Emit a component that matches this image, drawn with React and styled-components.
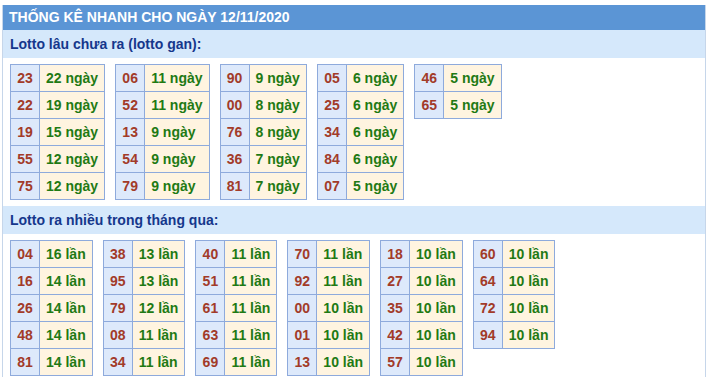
import React from "react";
import styled, { createGlobalStyle } from "styled-components";

const GlobalStyle = createGlobalStyle`
  body {
    margin: 0;
    background: #fff;
    font-family: "Liberation Sans", Arial, sans-serif;
  }
`;

const Panel = styled.div`
  margin: 5px 0 0 2px;
  width: 704px;
  border-left: 1px solid #c6d6ea;
  border-right: 1px solid #c6d6ea;
  box-sizing: border-box;
`;

const Title = styled.div`
  height: 25px;
  line-height: 25px;
  background: #5b95d5;
  color: #fff;
  font-weight: bold;
  font-size: 14px;
  padding-left: 6px;
`;

const SubTitle = styled.div`
  height: 28px;
  line-height: 28px;
  background: #d5e8fb;
  color: #15378c;
  font-weight: bold;
  font-size: 14px;
  padding-left: 7px;
`;

const Tables = styled.div`
  display: flex;
  align-items: flex-start;
  gap: 10px;
  padding: 6px 0 6px 7px;
`;

const Table = styled.table`
  border-collapse: collapse;
  font-size: 14px;
  font-weight: bold;
`;

const Num = styled.td`
  height: 26px;
  padding: 0;
  width: 28px;
  text-align: center;
  background: #dde9fb;
  color: #a23b29;
  border: 1px solid #8eaadc;
`;

const Count = styled.td`
  height: 26px;
  padding: 0 6px 0 6px;
  background: #fff4e0;
  color: #1f7a14;
  border: 1px solid #8eaadc;
  white-space: nowrap;
`;

const gan = [
  [["23", 22], ["22", 19], ["19", 15], ["55", 12], ["75", 12]],
  [["06", 11], ["52", 11], ["13", 9], ["54", 9], ["79", 9]],
  [["90", 9], ["00", 8], ["76", 8], ["36", 7], ["81", 7]],
  [["05", 6], ["25", 6], ["34", 6], ["84", 6], ["07", 5]],
  [["46", 5], ["65", 5]],
];

const nhieu = [
  [["04", 16], ["16", 14], ["26", 14], ["48", 14], ["81", 14]],
  [["38", 13], ["95", 13], ["79", 12], ["08", 11], ["34", 11]],
  [["40", 11], ["51", 11], ["61", 11], ["63", 11], ["69", 11]],
  [["70", 11], ["92", 11], ["00", 10], ["01", 10], ["13", 10]],
  [["18", 10], ["27", 10], ["35", 10], ["42", 10], ["57", 10]],
  [["60", 10], ["64", 10], ["72", 10], ["94", 10]],
];

function Block({ title, groups, unit }) {
  return (
    <>
      <SubTitle>{title}</SubTitle>
      <Tables>
        {groups.map((rows, i) => (
          <Table key={i}>
            <tbody>
              {rows.map(([n, c]) => (
                <tr key={n}>
                  <Num>{n}</Num>
                  <Count>
                    {c} {unit}
                  </Count>
                </tr>
              ))}
            </tbody>
          </Table>
        ))}
      </Tables>
    </>
  );
}

export default function App() {
  return (
    <>
      <GlobalStyle />
      <Panel>
        <Title>THỐNG KÊ NHANH CHO NGÀY 12/11/2020</Title>
        <Block title="Lotto lâu chưa ra (lotto gan):" groups={gan} unit="ngày" />
        <Block title="Lotto ra nhiều trong tháng qua:" groups={nhieu} unit="lần" />
      </Panel>
    </>
  );
}
